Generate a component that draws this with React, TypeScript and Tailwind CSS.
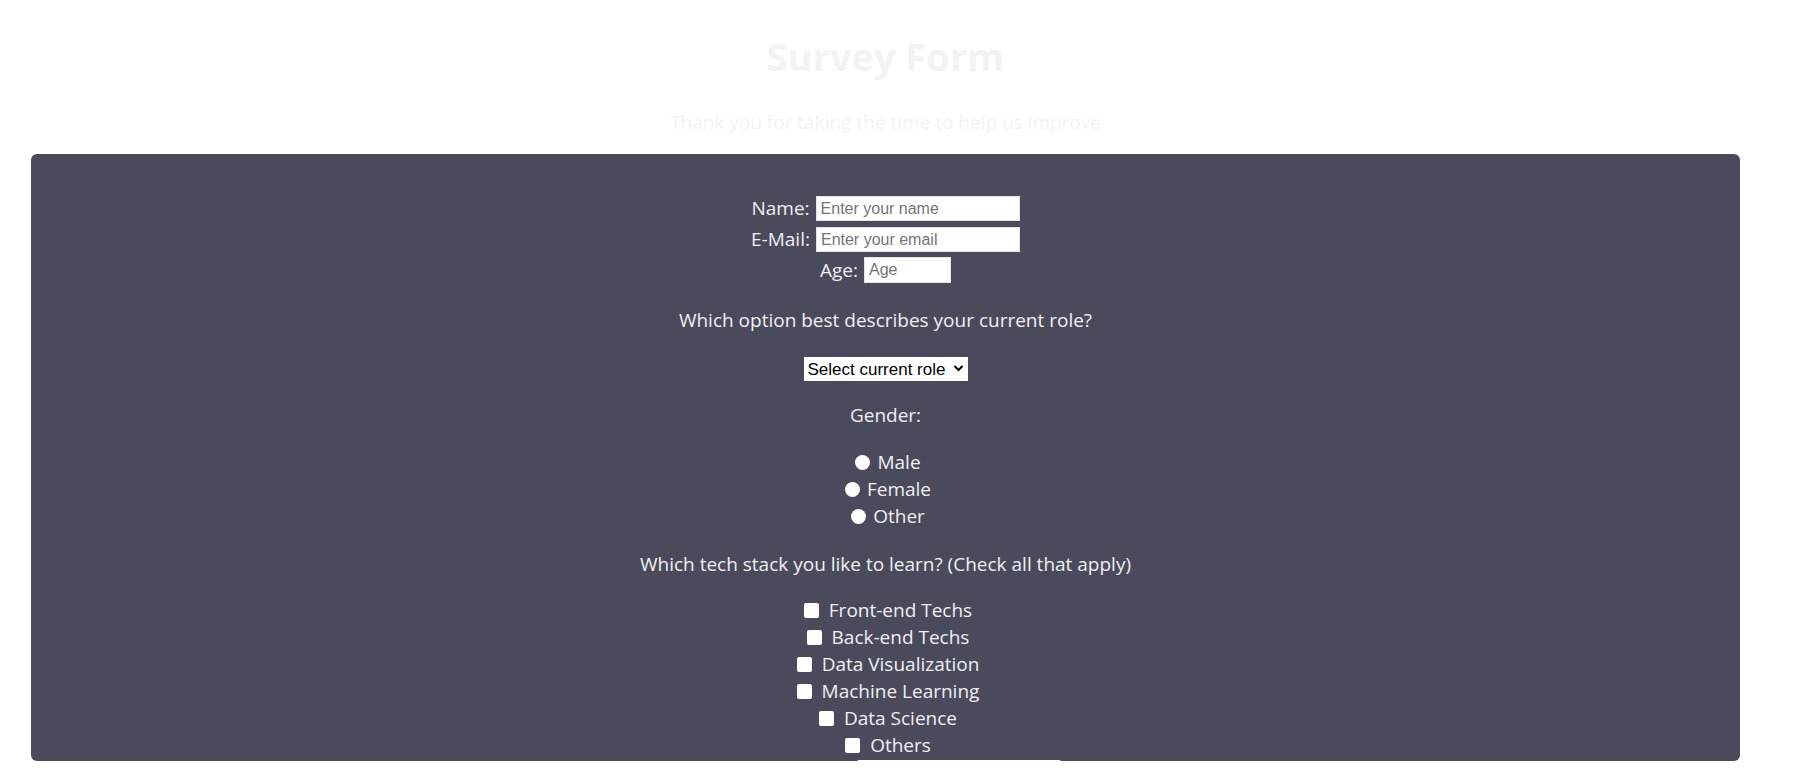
import React from 'react';

const labelFont = { fontFamily: '"Open Sans", "Noto Sans", sans-serif' };

const TextRow = ({ label, placeholder, width }: { label: string; placeholder: string; width: string }) => (
  <div className="flex h-[25px] items-center justify-center gap-[6px]">
    <label className="text-[19px] leading-[25px]">{label}</label>
    <input
      type="text"
      placeholder={placeholder}
      className={`${width} h-[25px] border border-[#e5e5e5] bg-white px-[4px] font-['Liberation_Sans',Arial,sans-serif] text-[16px] text-black placeholder:text-[#757575] outline-none`}
    />
  </div>
);

const RadioRow = ({ label }: { label: string }) => (
  <label className="flex h-[27px] items-center justify-center">
    <input
      type="radio"
      name="gender"
      className="ml-[5px] mr-[7px] h-[15px] w-[15px] appearance-none rounded-full bg-white"
    />
    <span className="text-[19px] leading-[27px]">{label}</span>
  </label>
);

const CheckRow = ({ label }: { label: string }) => (
  <label className="flex h-[27px] items-center justify-center">
    <input
      type="checkbox"
      className="ml-[5px] mr-[10px] h-[15px] w-[15px] appearance-none rounded-[2px] bg-white"
    />
    <span className="text-[19px] leading-[27px]">{label}</span>
  </label>
);

export default function App() {
  return (
    <div className="min-h-[770px] w-[1771px] bg-white" style={labelFont}>
      <header className="text-center text-[#f3f3f5]">
        <h1 className="pt-[32px] text-[38px] font-bold leading-[48px]">Survey Form</h1>
        <p className="mt-[28px] text-[19px] leading-[28px]">Thank you for taking the time to help us improve</p>
      </header>

      <main className="mx-[31px] mt-[18px] flex h-[607px] flex-col items-center rounded-[6px] bg-[#4b4a5c] pt-[42px] text-[#efeff3]">
        <TextRow label="Name:" placeholder="Enter your name" width="w-[204px]" />
        <div className="mt-[6px]">
          <TextRow label="E-Mail:" placeholder="Enter your email" width="w-[204px]" />
        </div>
        <div className="mt-[5px] flex h-[26px] items-center justify-center gap-[6px]">
          <label className="text-[19px] leading-[26px]">Age:</label>
          <input
            type="number"
            placeholder="Age"
            className="h-[26px] w-[87px] border border-[#e5e5e5] bg-white px-[4px] font-['Liberation_Sans',Arial,sans-serif] text-[16px] text-black placeholder:text-[#757575] outline-none"
          />
        </div>

        <p className="mt-[24px] text-[19px] leading-[26px]">Which option best describes your current role?</p>

        <div className="relative mt-[24px] h-[22px] w-[164px] bg-white">
          <select className="h-[22px] w-[164px] appearance-none bg-white pl-[4px] font-['Liberation_Sans',Arial,sans-serif] text-[17px] leading-[22px] text-black outline-none">
            <option>Select current role</option>
            <option>Student</option>
            <option>Full Time Job</option>
            <option>Full Time Learner</option>
            <option>Prefer not to say</option>
            <option>Other</option>
          </select>
          <svg className="pointer-events-none absolute right-[4px] top-[6px]" width="11" height="10" viewBox="0 0 11 10">
            <path d="M1.5 3 L5.5 7 L9.5 3" fill="none" stroke="#000" strokeWidth="2" />
          </svg>
        </div>

        <p className="mt-[23px] text-[19px] leading-[26px]">Gender:</p>

        <div className="mt-[21px] flex flex-col items-center">
          <RadioRow label="Male" />
          <RadioRow label="Female" />
          <RadioRow label="Other" />
        </div>

        <p className="mt-[21px] text-[19px] leading-[26px]">Which tech stack you like to learn? (Check all that apply)</p>

        <div className="mt-[20px] flex flex-col items-center">
          <CheckRow label="Front-end Techs" />
          <CheckRow label="Back-end Techs" />
          <CheckRow label="Data Visualization" />
          <CheckRow label="Machine Learning" />
          <CheckRow label="Data Science" />
          <CheckRow label="Others" />
        </div>

        <input
          type="text"
          className="ml-[146px] mt-[1px] h-[25px] w-[204px] shrink-0 rounded-t-[2px] bg-white outline-none"
        />
      </main>
    </div>
  );
}
